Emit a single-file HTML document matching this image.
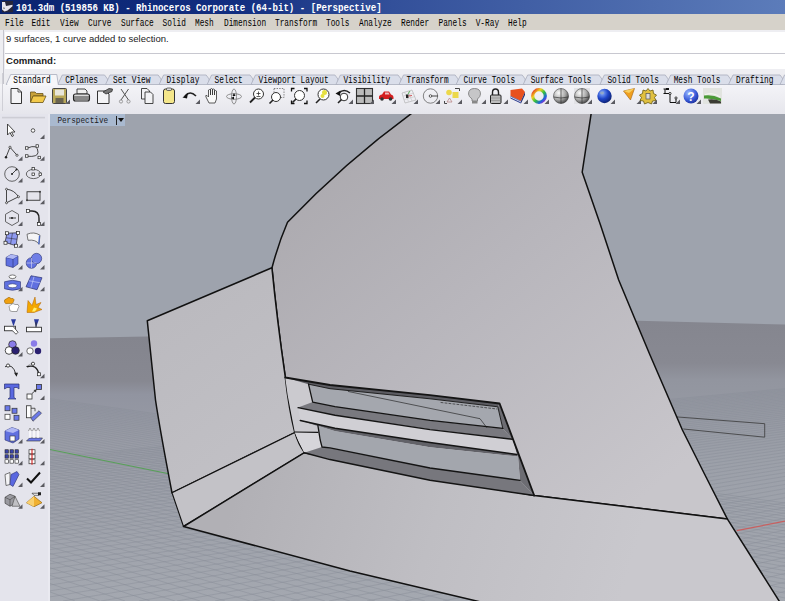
<!DOCTYPE html>
<html><head><meta charset="utf-8">
<style>
*{margin:0;padding:0;box-sizing:border-box}
html,body{width:785px;height:601px;overflow:hidden;background:#ececf0}
body{position:relative;font-family:"Liberation Sans",sans-serif}
.abs{position:absolute}
#title{left:0;top:0;width:785px;height:14px;background:linear-gradient(90deg,#0a2470 0%,#122e80 30%,#33509a 50%,#5c7cba 100%)}
#title .t{position:absolute;left:16px;top:2.5px;font-family:"Liberation Mono",monospace;font-weight:bold;font-size:9.1px;color:#fff;white-space:pre;line-height:12px;transform-origin:0 50%;transform:scaleY(1.15)}
#menu{left:0;top:14px;width:785px;height:16px;background:#d6d2ca}
.m{position:absolute;top:2.6px;font-family:"Liberation Mono",monospace;font-size:7.8px;color:#000;white-space:pre;line-height:12px;transform-origin:0 50%;transform:scaleY(1.3)}
#cmdwrap{left:0;top:30px;width:785px;height:44px;background:#eeeef2}
#cmd{left:5px;top:32px;width:780px;height:37px;background:#fff}
#vline{left:3px;top:30px;width:1px;height:82px;background:#c4c4cc}
#sep{left:5px;top:53px;width:780px;height:1px;background:#c8c8d0}
.ct{position:absolute;left:6px;font-size:9.5px;color:#222;white-space:pre;line-height:11px}
.tt{position:absolute;top:76px;font-family:"Liberation Mono",monospace;font-size:7.8px;color:#000;white-space:pre;line-height:11px;transform-origin:0 50%;transform:scaleY(1.3)}
#tb{left:0;top:84px;width:785px;height:30px;background:linear-gradient(#f4f4f8,#e6e6ec)}
#lt{left:0;top:114px;width:50px;height:487px;background:#e4e4ec}
#plab{left:50px;top:114px;width:75px;height:12px;background:#a9b9cf}
.pl{position:absolute;top:114.5px;font-family:"Liberation Mono",monospace;font-size:7.7px;color:#1a1a22;white-space:pre;line-height:12px;transform-origin:0 50%;transform:scaleY(1.12)}
</style></head><body>
<div id="title" class="abs">
 <svg class="abs" style="left:0;top:0" width="16" height="14" viewBox="0 0 16 14"><rect x="2" y="1" width="11" height="11.3" fill="#26263a"/><path d="M2 2 L5 2 L6 6 L12.5 4.8 L12.5 6.3 L7.5 10.5 L4.5 11.5 L2 9.5 Z" fill="#e6e4ec"/><path d="M3 8 L5 8.3" stroke="#555" stroke-width="0.8"/></svg>
 <div class="t">101.3dm (519856 KB) - Rhinoceros Corporate (64-bit) - [Perspective]</div>
</div>
<div id="menu" class="abs"><span class="m" style="left:5px">File</span><span class="m" style="left:31.6px">Edit</span><span class="m" style="left:60px">View</span><span class="m" style="left:88px">Curve</span><span class="m" style="left:121px">Surface</span><span class="m" style="left:162.5px">Solid</span><span class="m" style="left:195px">Mesh</span><span class="m" style="left:224px">Dimension</span><span class="m" style="left:275px">Transform</span><span class="m" style="left:326px">Tools</span><span class="m" style="left:359px">Analyze</span><span class="m" style="left:401px">Render</span><span class="m" style="left:438.5px">Panels</span><span class="m" style="left:475.7px">V-Ray</span><span class="m" style="left:508px">Help</span></div>
<div id="cmdwrap" class="abs"></div>
<div id="cmd" class="abs"></div>
<div id="vline" class="abs"></div>
<div id="sep" class="abs"></div>
<div class="ct" style="top:32.5px">9 surfaces, 1 curve added to selection.</div>
<div class="ct" style="top:54.5px;font-weight:bold;font-size:9.6px">Command:</div>
<div id="tb" class="abs"></div>
<div class="abs" style="left:2px;top:73px;width:1px;height:38px;background:#cfcfd6"></div>
<div class="abs" style="left:3px;top:30px;width:1px;height:40px;background:#c4c4cc"></div>
<svg class="abs" style="left:0;top:0" width="785" height="114"><defs>
<radialGradient id="sph" cx="0.35" cy="0.3" r="0.8"><stop offset="0" stop-color="#fafafa"/><stop offset="0.55" stop-color="#aaa"/><stop offset="1" stop-color="#333"/></radialGradient>
<radialGradient id="bsph" cx="0.35" cy="0.3" r="0.8"><stop offset="0" stop-color="#8ab0ff"/><stop offset="0.5" stop-color="#1f45c8"/><stop offset="1" stop-color="#0a1a60"/></radialGradient>
<radialGradient id="hsph" cx="0.35" cy="0.3" r="0.8"><stop offset="0" stop-color="#9ab8ff"/><stop offset="0.6" stop-color="#3a5ad8"/><stop offset="1" stop-color="#1a2a90"/></radialGradient>
<linearGradient id="cw" x1="0" y1="0" x2="1" y2="1"><stop offset="0" stop-color="#e02020"/><stop offset="0.3" stop-color="#f0d020"/><stop offset="0.55" stop-color="#30c040"/><stop offset="0.8" stop-color="#2060e0"/><stop offset="1" stop-color="#c020c0"/></linearGradient>
</defs><path d="M57.8 84.5 L62.3 75 L104.5 75 L107.5 79 V84.5 Z" fill="#dadeea" stroke="#a9adbd" stroke-width="0.8"/><path d="M105.5 84.5 L110.0 75 L158.1 75 L161.1 79 V84.5 Z" fill="#dadeea" stroke="#a9adbd" stroke-width="0.8"/><path d="M159.1 84.5 L163.6 75 L206.1 75 L209.1 79 V84.5 Z" fill="#dadeea" stroke="#a9adbd" stroke-width="0.8"/><path d="M207.1 84.5 L211.6 75 L250.0 75 L253.0 79 V84.5 Z" fill="#dadeea" stroke="#a9adbd" stroke-width="0.8"/><path d="M251.0 84.5 L255.5 75 L334.9 75 L337.9 79 V84.5 Z" fill="#dadeea" stroke="#a9adbd" stroke-width="0.8"/><path d="M335.9 84.5 L340.4 75 L398.0 75 L401.0 79 V84.5 Z" fill="#dadeea" stroke="#a9adbd" stroke-width="0.8"/><path d="M399.0 84.5 L403.5 75 L455.1 75 L458.1 79 V84.5 Z" fill="#dadeea" stroke="#a9adbd" stroke-width="0.8"/><path d="M456.1 84.5 L460.6 75 L522.2 75 L525.2 79 V84.5 Z" fill="#dadeea" stroke="#a9adbd" stroke-width="0.8"/><path d="M523.2 84.5 L527.7 75 L598.9 75 L601.9 79 V84.5 Z" fill="#dadeea" stroke="#a9adbd" stroke-width="0.8"/><path d="M599.9 84.5 L604.4 75 L665.2 75 L668.2 79 V84.5 Z" fill="#dadeea" stroke="#a9adbd" stroke-width="0.8"/><path d="M666.2 84.5 L670.7 75 L727.5 75 L730.5 79 V84.5 Z" fill="#dadeea" stroke="#a9adbd" stroke-width="0.8"/><path d="M728.5 84.5 L733.0 75 L780 75 L783 79 V84.5 Z" fill="#dadeea" stroke="#a9adbd" stroke-width="0.8"/><path d="M780 84.5 L784.5 75 L790 75 V84.5 Z" fill="#dadeea" stroke="#a9adbd" stroke-width="0.8"/><path d="M6.199999999999999 84.5 L10.7 74.5 L56.8 74.5 L58.3 84.5 Z" fill="#f6f6f9" stroke="#a9adbd" stroke-width="0.8"/><rect x="7.199999999999999" y="84" width="50.599999999999994" height="2" fill="#f6f6f9"/><g transform="translate(10,88) scale(1.0)"><path d="M1 0.5 H8 L11.5 4 V15.5 H1 Z" fill="#f4f4f6" stroke="#333" stroke-width="1"/><path d="M8 0.5 V4 H11.5" fill="none" stroke="#333" stroke-width="0.8"/></g><g transform="translate(30,88) scale(1.0)"><path d="M0.5 4 H5 L6.5 5.5 H13 V8 H3.5 L0.5 14 Z" fill="#c9a23a" stroke="#6a5418" stroke-width="0.8"/><path d="M3 8 H16 L13 14.5 H0.5 Z" fill="#f2c94a" stroke="#6a5418" stroke-width="0.8"/></g><g transform="translate(52,88) scale(1.0)"><rect x="0.5" y="0.5" width="14" height="15" rx="1" fill="#b9a85a" stroke="#444" stroke-width="1"/><rect x="3" y="1.5" width="9" height="6" fill="#e8e6dc"/><rect x="3.5" y="10" width="8" height="5" fill="#6a6450"/></g><path d="M65.5 104 L70.0 104 L70.0 99.5 Z" fill="#5a5a60"/><g transform="translate(73,88) scale(1.0)"><path d="M4 1 H12 L14 3 V6 H4 Z" fill="#f0f0f0" stroke="#333" stroke-width="0.9"/><rect x="0.5" y="6" width="16" height="7" rx="2" fill="#dcdcdc" stroke="#222" stroke-width="1.1"/><path d="M1 9 H16 M1 11 H16" stroke="#222" stroke-width="0.9"/></g><g transform="translate(97,88) scale(1.0)"><path d="M0.5 3 H9 L12 6 V15.5 H0.5 Z" fill="#f4f4f6" stroke="#333" stroke-width="1"/><path d="M6 4 L12 0.5 L15.5 1 L15 3.5 L9 6 Z" fill="#777" stroke="#222" stroke-width="0.7"/></g><g transform="translate(119,88) scale(1.0)"><path d="M2 1 L9.5 12 M9.5 1 L2 12" stroke="#555" stroke-width="1"/><circle cx="2" cy="13.5" r="1.6" fill="none" stroke="#888" stroke-width="0.8"/><circle cx="9.5" cy="13.5" r="1.6" fill="none" stroke="#888" stroke-width="0.8"/></g><g transform="translate(141,88) scale(1.0)"><path d="M0.5 0.5 H6 L8.5 3 V11 H0.5 Z" fill="#f2f2f4" stroke="#333" stroke-width="0.9"/><path d="M4 4 H9.5 L12 6.5 V15.5 H4 Z" fill="#f2f2f4" stroke="#333" stroke-width="0.9"/></g><g transform="translate(163,88) scale(1.0)"><rect x="0.5" y="1" width="11" height="14.5" rx="2" fill="#f4e68a" stroke="#333" stroke-width="1"/><rect x="3.5" y="0" width="5" height="2.5" rx="1" fill="#ddd" stroke="#333" stroke-width="0.7"/></g><g transform="translate(182,88) scale(1.0)"><path d="M3 8 Q8 2 14 8" fill="none" stroke="#222" stroke-width="1.6"/><path d="M0.5 9.5 L6 5 L5 10.5 Z" fill="#111"/></g><path d="M195.5 104 L200.0 104 L200.0 99.5 Z" fill="#5a5a60"/><g transform="translate(204,88) scale(1.0)"><path d="M5 15 L2 9 Q1 7 3 7.5 L4.5 9 V2 Q5.5 1 6.5 2 V7 V1 Q7.5 0 8.5 1 V7 V1.5 Q9.5 0.5 10.5 1.5 V7 V3 Q11.5 2 12.5 3 V11 L11 15 Z" fill="#f8f8f8" stroke="#333" stroke-width="0.8"/></g><g transform="translate(226,88) scale(1.0)"><ellipse cx="8" cy="8.5" rx="7.5" ry="2.8" fill="none" stroke="#777" stroke-width="0.8"/><ellipse cx="8" cy="8.5" rx="2.5" ry="7.5" fill="none" stroke="#777" stroke-width="0.8"/><path d="M8 5 L9.5 8 H6.5 Z" fill="#111"/><path d="M5 10 L8 8.5 L8 11.5 Z" fill="#111"/></g><g transform="translate(249,88) scale(1.0)"><circle cx="9.5" cy="6" r="5" fill="#fff" stroke="#333" stroke-width="1"/><path d="M6 9.5 L1 14.5" stroke="#222" stroke-width="1.8"/><path d="M9.5 3.5 V7.5 M7.5 5.5 H11.5 M7.5 8.5 H11.5" stroke="#333" stroke-width="0.8"/></g><g transform="translate(269,88) scale(1.0)"><rect x="5" y="0.5" width="10" height="9" fill="none" stroke="#666" stroke-width="0.8" stroke-dasharray="1.4 1.2"/><circle cx="7" cy="9" r="4.5" fill="#fff" stroke="#333" stroke-width="1"/><path d="M4 12 L0.5 15.5" stroke="#222" stroke-width="1.6"/></g><g transform="translate(291,88) scale(1.0)"><circle cx="8.5" cy="7.5" r="5" fill="#fff" stroke="#333" stroke-width="1"/><path d="M5 11 L1.5 14.5" stroke="#222" stroke-width="1.6"/><path d="M0.5 3.5 V0.5 H3.5 M13 0.5 H16 V3.5 M16 12.5 V15.5 H13 M0.5 12.5 V15.5 H3.5" fill="none" stroke="#111" stroke-width="1.3"/></g><g transform="translate(315,88) scale(1.0)"><circle cx="8.5" cy="6.5" r="5.5" fill="#fff" stroke="#333" stroke-width="1"/><circle cx="9.5" cy="4.5" r="2.5" fill="#e6e040"/><circle cx="7.5" cy="8" r="2" fill="#e6e040"/><path d="M5 11 L1 15" stroke="#222" stroke-width="1.6"/></g><g transform="translate(335,88) scale(1.0)"><path d="M4 5 Q9 0 15 5" fill="none" stroke="#222" stroke-width="1.5"/><path d="M0.5 5.5 L5.5 2.5 L5 8 Z" fill="#111"/><circle cx="9" cy="9" r="3.8" fill="#fff" stroke="#333" stroke-width="1"/><path d="M6.5 11.5 L3 15" stroke="#222" stroke-width="1.6"/></g><path d="M348.5 104 L353.0 104 L353.0 99.5 Z" fill="#5a5a60"/><g transform="translate(356,88) scale(1.0)"><rect x="0.5" y="0.5" width="16" height="15" fill="#bbb" stroke="#333" stroke-width="1.1"/><path d="M8.5 0.5 V15.5 M0.5 8 H16.5" stroke="#222" stroke-width="1.3"/></g><path d="M369.5 104 L374.0 104 L374.0 99.5 Z" fill="#5a5a60"/><g transform="translate(378,88) scale(1.0)"><path d="M1 9 Q1 7 4 6.5 L6 3.5 H11 L13 6.5 Q15.5 7 15.5 9 V11 H1 Z" fill="#d42020"/><circle cx="4" cy="11" r="1.8" fill="#333"/><circle cx="12.5" cy="11" r="1.8" fill="#333"/><path d="M7 4.5 H10.5 L11.5 6.5 H7 Z" fill="#f0c0c0"/></g><path d="M391.5 104 L396.0 104 L396.0 99.5 Z" fill="#5a5a60"/><g transform="translate(400,88) scale(1.0)"><path d="M2 5 L12 2 L16 12 L5 15 Z" fill="none" stroke="#aaa" stroke-width="0.6"/><path d="M4.5 4 L8.5 13.5 M8 3 L12 13 M3.5 8 L14 5 M4.5 11.5 L15 8.5" stroke="#bbb" stroke-width="0.5"/><rect x="6" y="6.5" width="2.5" height="3.5" fill="#222"/><path d="M8.5 8 L12 7.5" stroke="#c33" stroke-width="0.8"/><path d="M8 6 L10 3" stroke="#3a3" stroke-width="0.8"/></g><path d="M413.5 104 L418.0 104 L418.0 99.5 Z" fill="#5a5a60"/><g transform="translate(422,88) scale(1.0)"><circle cx="8.5" cy="8" r="7.2" fill="none" stroke="#666" stroke-width="0.8"/><circle cx="8.5" cy="8" r="1.3" fill="#fff" stroke="#333" stroke-width="0.8"/><path d="M9.8 8 H16" stroke="#333" stroke-width="0.9"/></g><path d="M435.5 104 L440.0 104 L440.0 99.5 Z" fill="#5a5a60"/><g transform="translate(444,88) scale(1.0)"><circle cx="5" cy="4.5" r="2.8" fill="#ecd84a"/><rect x="8.5" y="4" width="6" height="6" fill="#ecd84a"/><path d="M5.5 10 L8 14 H3 Z" fill="none" stroke="#b88" stroke-width="0.8"/><path d="M11 0.5 H15.5 V3 M0.5 13 V15.5 H3" fill="none" stroke="#333" stroke-width="0.9"/></g><path d="M457.5 104 L462.0 104 L462.0 99.5 Z" fill="#5a5a60"/><g transform="translate(468,88) scale(1.0)"><path d="M6.5 0.5 Q12.5 0.5 12.5 6 Q12.5 8.5 9.5 11 V13 H4 V11 Q0.5 8.5 0.5 6 Q0.5 0.5 6.5 0.5 Z" fill="#c6c6c8" stroke="#777" stroke-width="0.8"/><rect x="4" y="13" width="5.5" height="2.5" fill="#888"/></g><path d="M481.5 104 L486.0 104 L486.0 99.5 Z" fill="#5a5a60"/><g transform="translate(490,88) scale(1.0)"><path d="M2.5 7 V4.5 Q2.5 1 5.5 1 Q8.5 1 8.5 4.5 V7" fill="none" stroke="#222" stroke-width="1.4"/><rect x="0.5" y="7" width="10.5" height="8.5" rx="1" fill="#bcbcbc" stroke="#222" stroke-width="1"/><path d="M1 10 H10.5 M1 12.5 H10.5" stroke="#888" stroke-width="0.6"/></g><path d="M503.5 104 L508.0 104 L508.0 99.5 Z" fill="#5a5a60"/><g transform="translate(510,88) scale(1.0)"><path d="M0.5 2 L12 0.5 L15 4 L11 13 L0.5 8 Z" fill="#e8501e"/><path d="M0.5 8 L11 13 L11 15.5 L0.5 10.5 Z" fill="#2a3a8e"/><path d="M0.5 9 L11 14" stroke="#fff" stroke-width="0.8"/><path d="M11 13 L15 4 V7 L11 15.5 Z" fill="#1e2a6e"/></g><path d="M523.5 104 L528.0 104 L528.0 99.5 Z" fill="#5a5a60"/><g transform="translate(531,88) scale(1.0)"><circle cx="8" cy="8" r="6.3" fill="none" stroke="url(#cw)" stroke-width="3.2"/></g><path d="M544.5 104 L549.0 104 L549.0 99.5 Z" fill="#5a5a60"/><g transform="translate(553,88) scale(1.0)"><circle cx="8" cy="8" r="7.5" fill="url(#sph)" stroke="#444" stroke-width="0.6"/><path d="M8 0.5 V15.5 M0.5 9 Q8 11 15.5 9" fill="none" stroke="#333" stroke-width="0.7"/></g><g transform="translate(574,88) scale(1.0)"><rect x="0" y="0" width="16" height="16" fill="#e2e2e6"/><circle cx="8" cy="8" r="7.5" fill="url(#sph)" stroke="#444" stroke-width="0.6"/><path d="M8 0.5 V15.5 M0.5 9 Q8 11 15.5 9" fill="none" stroke="#333" stroke-width="0.7"/></g><path d="M587.5 104 L592.0 104 L592.0 99.5 Z" fill="#5a5a60"/><g transform="translate(597,88) scale(1.0)"><circle cx="7.5" cy="8" r="7.2" fill="url(#bsph)"/><ellipse cx="5" cy="5" rx="2" ry="1.4" fill="#9ab" opacity="0.8"/></g><path d="M610.5 104 L615.0 104 L615.0 99.5 Z" fill="#5a5a60"/><g transform="translate(623,88) scale(1.0)"><path d="M0.5 3 L11.5 0.5 L7.5 12 Z" fill="#f0a020" stroke="#a06010" stroke-width="0.6"/><path d="M0.5 3 L11.5 0.5 L6 5 Z" fill="#f8d060"/></g><path d="M636.5 104 L641.0 104 L641.0 99.5 Z" fill="#5a5a60"/><g transform="translate(639,88) scale(1.0)"><path d="M9 0.5 L11 3 L14 2 L14.5 5.5 L17.5 7 L15.5 9.5 L17 12.5 L13.5 13 L12.5 16 L9 14.5 L5.5 16 L4.5 13 L1 12.5 L2.5 9.5 L0.5 7 L3.5 5.5 L4 2 L7 3 Z" fill="#e0c040" stroke="#6a5a10" stroke-width="0.8"/><rect x="7" y="5.5" width="4" height="5.5" fill="#ddd" stroke="#555" stroke-width="0.7"/></g><path d="M652.5 104 L657.0 104 L657.0 99.5 Z" fill="#5a5a60"/><g transform="translate(662,88) scale(1.0)"><path d="M1.5 1 H6 M3 1 V6 M1.5 5.5 L8 5.5 M8 5.5 V14.5 H14 M14 10 V14.5" fill="none" stroke="#111" stroke-width="1"/><circle cx="8" cy="5.5" r="1.1" fill="#fff" stroke="#111" stroke-width="0.8"/><circle cx="14" cy="10" r="1.1" fill="#fff" stroke="#111" stroke-width="0.8"/><rect x="4" y="0" width="3" height="2" fill="#111"/></g><path d="M675.5 104 L680.0 104 L680.0 99.5 Z" fill="#5a5a60"/><g transform="translate(683,88) scale(1.0)"><circle cx="8" cy="8" r="7.5" fill="url(#hsph)"/><text x="8" y="13" font-family="Liberation Sans" font-weight="bold" font-size="12" fill="#fff" text-anchor="middle">?</text></g><path d="M696.5 104 L701.0 104 L701.0 99.5 Z" fill="#5a5a60"/><g transform="translate(703,88) scale(1.0)"><rect x="0" y="0" width="19" height="16" fill="#e2e4e0"/><path d="M1 7.5 Q9 6 18 10.5 L18 13 Q9 10 1 10.5 Z" fill="#4a9a36"/><path d="M5 11.5 Q12 10.5 18 13.5 V15.5 H7 Z" fill="#3c3c34"/><path d="M2 6.5 Q10 4 17 9" stroke="#f4f8f0" stroke-width="1" fill="none"/></g></svg>
<span class="tt" style="left:13.2px">Standard</span><span class="tt" style="left:65.3px">CPlanes</span><span class="tt" style="left:113px">Set View</span><span class="tt" style="left:166.6px">Display</span><span class="tt" style="left:214.6px">Select</span><span class="tt" style="left:258.5px">Viewport Layout</span><span class="tt" style="left:343.4px">Visibility</span><span class="tt" style="left:406.5px">Transform</span><span class="tt" style="left:463.6px">Curve Tools</span><span class="tt" style="left:530.7px">Surface Tools</span><span class="tt" style="left:607.4px">Solid Tools</span><span class="tt" style="left:673.7px">Mesh Tools</span><span class="tt" style="left:736px">Drafting</span>
<div id="lt" class="abs"></div>
<div class="abs" style="left:47.5px;top:114px;width:2.5px;height:487px;background:#e9e9f0"></div>
<div class="abs" style="left:0;top:0;width:785px;height:601px;clip-path:inset(114px 0 0 50px)"><svg class="abs" style="left:0;top:0" width="785" height="601" viewBox="0 0 785 601">
 <defs>
  <linearGradient id="floorL" x1="0" y1="336" x2="0" y2="601" gradientUnits="userSpaceOnUse">
   <stop offset="0" stop-color="#84858e"/><stop offset="0.17" stop-color="#878891"/><stop offset="0.22" stop-color="#9194a0"/><stop offset="0.4" stop-color="#999ca6"/><stop offset="1" stop-color="#a4a8b0"/>
  </linearGradient>
  <linearGradient id="floorR" x1="0" y1="321" x2="0" y2="601" gradientUnits="userSpaceOnUse">
   <stop offset="0" stop-color="#85868f"/><stop offset="0.15" stop-color="#888992"/><stop offset="0.21" stop-color="#92959f"/><stop offset="0.5" stop-color="#9ca0a9"/><stop offset="1" stop-color="#a4a8b0"/>
  </linearGradient>
  <linearGradient id="main" x1="330" y1="130" x2="640" y2="500" gradientUnits="userSpaceOnUse">
   <stop offset="0" stop-color="#aba9ae"/><stop offset="0.45" stop-color="#b8b6bc"/><stop offset="1" stop-color="#c8c6cb"/>
  </linearGradient>
  <linearGradient id="lower" x1="240" y1="480" x2="620" y2="601" gradientUnits="userSpaceOnUse">
   <stop offset="0" stop-color="#b1b0b5"/><stop offset="0.5" stop-color="#bfbec3"/><stop offset="1" stop-color="#c9c8cd"/>
  </linearGradient>
  <linearGradient id="lpan" x1="150" y1="300" x2="280" y2="480" gradientUnits="userSpaceOnUse">
   <stop offset="0" stop-color="#bab9be"/><stop offset="1" stop-color="#c2c1c6"/>
  </linearGradient>
 </defs>
 <rect x="50" y="114" width="735" height="487" fill="#9ea3ad"/>
 <path d="M50 338.3 L147 336.6 L400 331 L400 601 L50 601 Z" fill="url(#floorL)"/>
 <path d="M400 331 L637.8 320.8 L785 324.5 L785 601 L400 601 Z" fill="url(#floorR)"/>
 <clipPath id="gclip"><path d="M50 388 L400 380 L637 370 L785 372 V601 H50 Z"/></clipPath>
 <path clip-path="url(#gclip)" d="M-833 273.4 L-1500.0 601 M-833 273.4 L-1475.0 601 M-833 273.4 L-1450.0 601 M-833 273.4 L-1425.0 601 M-833 273.4 L-1400.0 601 M-833 273.4 L-1375.0 601 M-833 273.4 L-1350.0 601 M-833 273.4 L-1325.0 601 M-833 273.4 L-1300.0 601 M-833 273.4 L-1275.0 601 M-833 273.4 L-1250.0 601 M-833 273.4 L-1225.0 601 M-833 273.4 L-1200.0 601 M-833 273.4 L-1175.0 601 M-833 273.4 L-1150.0 601 M-833 273.4 L-1125.0 601 M-833 273.4 L-1100.0 601 M-833 273.4 L-1075.0 601 M-833 273.4 L-1050.0 601 M-833 273.4 L-1025.0 601 M-833 273.4 L-1000.0 601 M-833 273.4 L-975.0 601 M-833 273.4 L-950.0 601 M-833 273.4 L-925.0 601 M-833 273.4 L-900.0 601 M-833 273.4 L-875.0 601 M-833 273.4 L-850.0 601 M-833 273.4 L-825.0 601 M-833 273.4 L-800.0 601 M-833 273.4 L-775.0 601 M-833 273.4 L-750.0 601 M-833 273.4 L-725.0 601 M-833 273.4 L-700.0 601 M-833 273.4 L-675.0 601 M-833 273.4 L-650.0 601 M-833 273.4 L-625.0 601 M-833 273.4 L-600.0 601 M-833 273.4 L-575.0 601 M-833 273.4 L-550.0 601 M-833 273.4 L-525.0 601 M-833 273.4 L-500.0 601 M-833 273.4 L-475.0 601 M-833 273.4 L-450.0 601 M-833 273.4 L-425.0 601 M-833 273.4 L-400.0 601 M-833 273.4 L-375.0 601 M-833 273.4 L-350.0 601 M-833 273.4 L-325.0 601 M-833 273.4 L-300.0 601 M-833 273.4 L-275.0 601 M-833 273.4 L-250.0 601 M-833 273.4 L-225.0 601 M-833 273.4 L-200.0 601 M-833 273.4 L-175.0 601 M-833 273.4 L-150.0 601 M-833 273.4 L-125.0 601 M-833 273.4 L-100.0 601 M-833 273.4 L-75.0 601 M-833 273.4 L-50.0 601 M-833 273.4 L-25.0 601 M-833 273.4 L0.0 601 M-833 273.4 L25.0 601 M-833 273.4 L50.0 601 M-833 273.4 L75.0 601 M-833 273.4 L100.0 601 M-833 273.4 L125.0 601 M-833 273.4 L150.0 601 M-833 273.4 L175.0 601 M-833 273.4 L200.0 601 M-833 273.4 L225.0 601 M-833 273.4 L250.0 601 M-833 273.4 L275.0 601 M-833 273.4 L300.0 601 M-833 273.4 L325.0 601 M-833 273.4 L350.0 601 M-833 273.4 L375.0 601 M-833 273.4 L400.0 601 M-833 273.4 L425.0 601 M-833 273.4 L450.0 601 M-833 273.4 L475.0 601 M-833 273.4 L500.0 601 M-833 273.4 L525.0 601 M-833 273.4 L550.0 601 M-833 273.4 L575.0 601 M-833 273.4 L600.0 601 M-833 273.4 L625.0 601 M-833 273.4 L650.0 601 M-833 273.4 L675.0 601 M-833 273.4 L700.0 601 M-833 273.4 L725.0 601 M-833 273.4 L750.0 601 M-833 273.4 L775.0 601 M-833 273.4 L800.0 601 M-833 273.4 L825.0 601 M-833 273.4 L850.0 601 M-833 273.4 L875.0 601 M-833 273.4 L900.0 601 M-833 273.4 L925.0 601 M-833 273.4 L950.0 601 M-833 273.4 L975.0 601 M-833 273.4 L1000.0 601 M-833 273.4 L1025.0 601 M-833 273.4 L1050.0 601 M-833 273.4 L1075.0 601 M-833 273.4 L1100.0 601 M-833 273.4 L1125.0 601 M-833 273.4 L1150.0 601 M-833 273.4 L1175.0 601 M-833 273.4 L1200.0 601 M-833 273.4 L1225.0 601 M-833 273.4 L1250.0 601 M-833 273.4 L1275.0 601 M-833 273.4 L1300.0 601 M-833 273.4 L1325.0 601 M-833 273.4 L1350.0 601 M-833 273.4 L1375.0 601 M-833 273.4 L1400.0 601 M-833 273.4 L1425.0 601 M-833 273.4 L1450.0 601 M-833 273.4 L1475.0 601 M2023 273.4 L-1495.0 601 M2023 273.4 L-1457.0 601 M2023 273.4 L-1419.0 601 M2023 273.4 L-1381.0 601 M2023 273.4 L-1343.0 601 M2023 273.4 L-1305.0 601 M2023 273.4 L-1267.0 601 M2023 273.4 L-1229.0 601 M2023 273.4 L-1191.0 601 M2023 273.4 L-1153.0 601 M2023 273.4 L-1115.0 601 M2023 273.4 L-1077.0 601 M2023 273.4 L-1039.0 601 M2023 273.4 L-1001.0 601 M2023 273.4 L-963.0 601 M2023 273.4 L-925.0 601 M2023 273.4 L-887.0 601 M2023 273.4 L-849.0 601 M2023 273.4 L-811.0 601 M2023 273.4 L-773.0 601 M2023 273.4 L-735.0 601 M2023 273.4 L-697.0 601 M2023 273.4 L-659.0 601 M2023 273.4 L-621.0 601 M2023 273.4 L-583.0 601 M2023 273.4 L-545.0 601 M2023 273.4 L-507.0 601 M2023 273.4 L-469.0 601 M2023 273.4 L-431.0 601 M2023 273.4 L-393.0 601 M2023 273.4 L-355.0 601 M2023 273.4 L-317.0 601 M2023 273.4 L-279.0 601 M2023 273.4 L-241.0 601 M2023 273.4 L-203.0 601 M2023 273.4 L-165.0 601 M2023 273.4 L-127.0 601 M2023 273.4 L-89.0 601 M2023 273.4 L-51.0 601 M2023 273.4 L-13.0 601 M2023 273.4 L25.0 601 M2023 273.4 L63.0 601 M2023 273.4 L101.0 601 M2023 273.4 L139.0 601 M2023 273.4 L177.0 601 M2023 273.4 L215.0 601 M2023 273.4 L253.0 601 M2023 273.4 L291.0 601 M2023 273.4 L329.0 601 M2023 273.4 L367.0 601 M2023 273.4 L405.0 601 M2023 273.4 L443.0 601 M2023 273.4 L481.0 601 M2023 273.4 L519.0 601 M2023 273.4 L557.0 601 M2023 273.4 L595.0 601 M2023 273.4 L633.0 601 M2023 273.4 L671.0 601 M2023 273.4 L709.0 601 M2023 273.4 L747.0 601 M2023 273.4 L785.0 601 M2023 273.4 L823.0 601 M2023 273.4 L861.0 601 M2023 273.4 L899.0 601 M2023 273.4 L937.0 601 M2023 273.4 L975.0 601 M2023 273.4 L1013.0 601 M2023 273.4 L1051.0 601 M2023 273.4 L1089.0 601 M2023 273.4 L1127.0 601 M2023 273.4 L1165.0 601 M2023 273.4 L1203.0 601 M2023 273.4 L1241.0 601 M2023 273.4 L1279.0 601 M2023 273.4 L1317.0 601 M2023 273.4 L1355.0 601 M2023 273.4 L1393.0 601 M2023 273.4 L1431.0 601 M2023 273.4 L1469.0 601 M2023 273.4 L1507.0 601 M2023 273.4 L1545.0 601 M2023 273.4 L1583.0 601 M2023 273.4 L1621.0 601 M2023 273.4 L1659.0 601 M2023 273.4 L1697.0 601 M2023 273.4 L1735.0 601 M2023 273.4 L1773.0 601 M2023 273.4 L1811.0 601 M2023 273.4 L1849.0 601 M2023 273.4 L1887.0 601 M2023 273.4 L1925.0 601 M2023 273.4 L1963.0 601 M2023 273.4 L2001.0 601 M2023 273.4 L2039.0 601 M2023 273.4 L2077.0 601 M2023 273.4 L2115.0 601 M2023 273.4 L2153.0 601 M2023 273.4 L2191.0 601 M2023 273.4 L2229.0 601 M2023 273.4 L2267.0 601" stroke="#898d97" stroke-width="0.7" stroke-opacity="0.65" fill="none"/>
 <!-- axes -->
 <path d="M50 449.5 L170 474" stroke="#58a058" stroke-width="1.2"/>
 <path d="M736.7 530.7 L785 521.2" stroke="#c86060" stroke-width="1.2"/>
 <!-- slab on right -->
 <path d="M676.5 416.9 L764.7 423.7 L764.7 437.2 L683.3 429" stroke="#3a3a3a" stroke-width="0.8" fill="none"/>
 <!-- main surface -->
 <path d="M413.5 112 Q345 162 287.5 222.3 Q278.5 243 272 267.8 Q277 320 285.3 377.2 Q289 410 294.8 432.6 Q298 444 304.4 452.7 L534.2 495.5 L727.3 518.9 L705 475 L682.4 430 L666 392 L650 355 L634.5 318 L618.7 280 L600.5 225 L582.2 172.2 L591.4 112 Z" fill="url(#main)" stroke="#111" stroke-width="1.5" stroke-linejoin="round"/>
 <!-- left panel -->
 <path d="M147.3 320.8 L271.9 267.8 Q277 320 285.3 377.2 Q289 410 294.8 432.6 L172 492.8 Q160 430 155.5 400 Z" fill="url(#lpan)" stroke="#111" stroke-width="1.5" stroke-linejoin="round"/>
 <!-- fillet strip -->
 <path d="M172 492.8 L294.8 432.6 Q298 444 304.4 452.7 L183.5 526.5 Z" fill="#c3c2c7" stroke="#111" stroke-width="1.1" stroke-linejoin="round"/>
 <!-- lower surface -->
 <path d="M183.5 526.5 L304.4 452.7 L534.2 495.5 L727.3 518.9 L780.4 603 L485 603 L350 571 Z" fill="url(#lower)" stroke="#111" stroke-width="1.5" stroke-linejoin="round"/>
 <!-- slot -->
 <g stroke-linejoin="round">
 <path d="M285.2 377.5 L330 385 L430 395.1 L499.6 403.5 L534.2 495.5 L430 480.3 L330 459.6 L304.4 452.7 L298.1 440 L294.7 431.7 L287.6 395 Z" fill="#cbcacf"/>
 <path d="M294.7 432 L317.9 432.4 L322 447 L304.4 452.7 L298.1 440 Z" fill="#d6d5da"/>
 <path d="M308.5 384.2 L330 388.7 L430 398.8 L497.8 406.8 L502.8 428.4 L430 420.4 L335 406.6 L312.7 402.1 Z" fill="#a4a7ae"/>
 <path d="M285.2 377.5 L330 385 L430 395.1 L499.6 403.5 L497.8 406.8 L430 398.8 L330 388.7 L308.5 384.2 Z" fill="#5c5c62"/>
 <path d="M499.6 403.5 L534.2 495.5 L520 480.4 L518 456.6 L516.9 454.4 L512.5 439.3 L502.8 428.4 L497.8 406.8 Z" fill="#6c6c72"/>
 <path d="M298.1 407.4 L312.7 402.1 L335 406.6 L430 420.4 L502.8 428.4 L512.5 439.3 L430 429.6 L335 415.2 L298.1 407.7 Z" fill="#79797f"/>
 <path d="M298.1 407.7 L335 415.2 L430 429.6 L512.5 439.3 L516.9 454.4 L430 442.4 L335 427.9 L300.3 420 Z" fill="#d0cfd4"/>
 <path d="M300.3 420.5 L335 428.2 L430 442.6 L516.9 454.4 L518 456.6 L430 447.3 L335 431.2 L317.9 426 Z" fill="#626268"/>
 <path d="M317.9 425.7 L335 430.9 L430 447.3 L518 456.6 L520 480.4 L430 468 L330 447.9 L322 447 L320.2 440 Z" fill="#a3a6ad"/>
 <path d="M322 447 L330 447.9 L430 468 L520 480.4 L534.2 495.5 L430 480.3 L330 459.6 L304.4 452.7 Z" fill="#77777d"/>
 </g>
 <g fill="none" stroke="#141414" stroke-linejoin="round" stroke-linecap="round">
  <path d="M285.2 377.5 L330 385 L430 395.1 L499.6 403.5 L534.2 495.5" stroke-width="1.8"/>
  <path d="M308.5 384.2 L330 388.7 L430 398.8 L497.8 406.8 L502.8 428.4" stroke-width="0.9"/>
  <path d="M308.5 384.2 L312.7 402.1 L335 406.6 L430 420.4 L502.8 428.4" stroke-width="1.3"/>
  <path d="M298.1 407.6 L335 415.2 L430 429.6 L512.5 439.3" stroke-width="1.4"/>
  <path d="M300.3 420.5 L335 428.2 L430 442.6 L516.9 454.4" stroke-width="1.5"/>
  <path d="M317.9 425.7 L320.2 440 L322 447 L330 447.9 L430 468 L520 480.4" stroke-width="1.3"/>
  <path d="M304.4 452.7 L330 459.6 L430 480.3 L534.2 495.5" stroke-width="1.5"/>
  <path d="M294.7 432 L317.9 432.4" stroke-width="1.1"/>
  <path d="M348.3 391.5 L480 418.7 L486.6 427.4" stroke-width="0.6"/>
  <path d="M441 402.5 L497 409" stroke-width="0.6" stroke-dasharray="2 2"/>
 </g>
</svg>
</div>
<div id="plab" class="abs"></div>
<span class="pl" style="left:57.4px">Perspective</span>
<div class="abs" style="left:116px;top:116px;width:1px;height:9px;background:#222"></div>
<svg class="abs" style="left:118px;top:118px" width="6" height="5"><path d="M0 0 H6 L3 4 Z" fill="#111"/></svg>
<svg class="abs" style="left:0;top:114px" width="50" height="487" viewBox="0 114 50 487"><rect x="2" y="116.8" width="43" height="1.6" fill="#cdcdd5"/><g transform="translate(4,122.5) scale(1.0)"><path transform="translate(0,1)" d="M3.5 0.5 L3.5 11.5 L6 9 L8 13 L9.5 12.2 L7.5 8.5 L11 8.5 Z" fill="#fff" stroke="#333" stroke-width="0.9"/></g><g transform="translate(26,122.5) scale(1.0)"><circle cx="7" cy="8" r="1.8" fill="#fff" stroke="#444" stroke-width="0.9"/></g><path d="M40 139.0 L44.5 139.0 L44.5 134.5 Z" fill="#5a5a60"/><g transform="translate(4,144.25) scale(1.0)"><path d="M2 13 L6 3 L13 11" fill="none" stroke="#333" stroke-width="0.9"/><circle cx="2" cy="13" r="1.2" fill="#222"/><circle cx="6" cy="3" r="1.1" fill="#fff" stroke="#222" stroke-width="0.7"/><circle cx="13" cy="11" r="1.1" fill="#fff" stroke="#222" stroke-width="0.7"/></g><path d="M18 160.75 L22.5 160.75 L22.5 156.25 Z" fill="#5a5a60"/><g transform="translate(26,144.25) scale(1.0)"><path d="M1 4 Q12 -1 12 8 Q12 13 1 12" fill="none" stroke="#333" stroke-width="0.9"/><rect x="-0.5" y="2.5" width="2.5" height="2.5" fill="#fff" stroke="#222" stroke-width="0.7"/><rect x="10" y="0.5" width="2.5" height="2.5" fill="#fff" stroke="#222" stroke-width="0.7"/><rect x="-0.5" y="10.5" width="2.5" height="2.5" fill="#fff" stroke="#222" stroke-width="0.7"/><rect x="12" y="12" width="2.5" height="2.5" fill="#fff" stroke="#222" stroke-width="0.7"/></g><path d="M40 160.75 L44.5 160.75 L44.5 156.25 Z" fill="#5a5a60"/><g transform="translate(4,166.0) scale(1.0)"><circle cx="8" cy="8" r="7.3" fill="none" stroke="#444" stroke-width="0.8"/><path d="M8 8 L12.5 3.5" stroke="#333" stroke-width="0.9"/><circle cx="8" cy="8" r="1" fill="#222"/><circle cx="12.5" cy="3.5" r="1" fill="#222"/></g><path d="M18 182.5 L22.5 182.5 L22.5 178.0 Z" fill="#5a5a60"/><g transform="translate(26,166.0) scale(1.0)"><ellipse cx="7.5" cy="8" rx="7.2" ry="4.6" fill="none" stroke="#444" stroke-width="0.8"/><rect x="6" y="1.5" width="2.5" height="2.5" fill="#fff" stroke="#222" stroke-width="0.7"/><rect x="6" y="7" width="2.5" height="2.5" fill="#fff" stroke="#222" stroke-width="0.7"/><rect x="13" y="7" width="2.5" height="2.5" fill="#fff" stroke="#222" stroke-width="0.7"/></g><path d="M40 182.5 L44.5 182.5 L44.5 178.0 Z" fill="#5a5a60"/><g transform="translate(4,187.75) scale(1.0)"><path d="M2.5 1.5 Q10 2 14.5 9 L2.5 15 Z" fill="none" stroke="#333" stroke-width="0.9"/><circle cx="2.5" cy="1.5" r="1" fill="#fff" stroke="#222" stroke-width="0.7"/><circle cx="14.5" cy="9" r="1" fill="#fff" stroke="#222" stroke-width="0.7"/><circle cx="2.5" cy="15" r="1" fill="#fff" stroke="#222" stroke-width="0.7"/></g><path d="M18 204.25 L22.5 204.25 L22.5 199.75 Z" fill="#5a5a60"/><g transform="translate(26,187.75) scale(1.0)"><rect x="1" y="4" width="13" height="8.5" fill="none" stroke="#333" stroke-width="0.9"/><circle cx="1" cy="12.5" r="0.9" fill="#333"/><circle cx="14" cy="4" r="0.9" fill="#333"/></g><path d="M40 204.25 L44.5 204.25 L44.5 199.75 Z" fill="#5a5a60"/><g transform="translate(4,209.5) scale(1.0)"><path d="M8 1 L14.5 4.8 V12.2 L8 16 L1.5 12.2 V4.8 Z" fill="none" stroke="#444" stroke-width="0.8"/><path d="M5 8.5 H12" stroke="#333" stroke-width="0.9"/><circle cx="8" cy="8.5" r="1" fill="#222"/></g><path d="M18 226.0 L22.5 226.0 L22.5 221.5 Z" fill="#5a5a60"/><g transform="translate(26,209.5) scale(1.0)"><path d="M2 1.5 H6 Q13 1.5 13 9 V14" fill="none" stroke="#222" stroke-width="1.4"/><rect x="0.5" y="0" width="3" height="3" fill="#fff" stroke="#222" stroke-width="0.7"/><rect x="11.5" y="13" width="3" height="3" fill="#fff" stroke="#222" stroke-width="0.7"/></g><path d="M40 226.0 L44.5 226.0 L44.5 221.5 Z" fill="#5a5a60"/><g transform="translate(4,231.25) scale(1.0)"><path d="M3 2 L14 1.5 L12 14.5 L1 11 Z" fill="#8f9af0" stroke="#334" stroke-width="0.8"/><path d="M8.5 1.7 L6.5 13 M2 6.5 L13 8" stroke="#334" stroke-width="0.6"/><rect x="1.5" y="0.5" width="3" height="3" fill="#fff" stroke="#222" stroke-width="0.7"/><rect x="12.5" y="0.3" width="3" height="3" fill="#fff" stroke="#222" stroke-width="0.7"/><rect x="0" y="10" width="3" height="3" fill="#fff" stroke="#222" stroke-width="0.7"/><rect x="10.5" y="13" width="3" height="3" fill="#fff" stroke="#222" stroke-width="0.7"/></g><path d="M18 247.75 L22.5 247.75 L22.5 243.25 Z" fill="#5a5a60"/><g transform="translate(26,231.25) scale(1.0)"><path d="M1 3 Q8 0 14 4 L13 13 Q10 8 2 9 Z" fill="#f4f4f6" stroke="#555" stroke-width="0.8"/><path d="M13.5 4.5 L12.8 13" stroke="#46c" stroke-width="1.2"/></g><path d="M40 247.75 L44.5 247.75 L44.5 243.25 Z" fill="#5a5a60"/><g transform="translate(4,253.0) scale(1.0)"><path d="M2 4.5 L7 1.5 L14 3 V11 L9 14.5 L2 12.5 Z" fill="#5f70e0" stroke="#2a3070" stroke-width="0.6"/><path d="M2 4.5 L9 6 L14 3 M9 6 V14.5" fill="none" stroke="#2a3070" stroke-width="0.6"/><path d="M2 4.5 L7 1.5 L14 3 L9 6 Z" fill="#b0b8f4"/></g><path d="M18 269.5 L22.5 269.5 L22.5 265.0 Z" fill="#5a5a60"/><g transform="translate(26,253.0) scale(1.0)"><circle cx="5.5" cy="10" r="5.3" fill="#6070e0" stroke="#2a3070" stroke-width="0.6"/><circle cx="10.5" cy="5.5" r="5.2" fill="#6f7ee6" stroke="#2a3070" stroke-width="0.6"/><path d="M5.5 5 V15 M0.5 10 H10.5" stroke="#dde" stroke-width="0.6"/></g><path d="M40 269.5 L44.5 269.5 L44.5 265.0 Z" fill="#5a5a60"/><g transform="translate(4,274.75) scale(1.0)"><ellipse cx="8.5" cy="2" rx="3.5" ry="1.8" fill="#fff" stroke="#444" stroke-width="0.7"/><path d="M0.5 7 Q8.5 4 16.5 7 V14 Q8.5 17 0.5 14 Z" fill="#5f70e0" stroke="#2a3070" stroke-width="0.6"/><ellipse cx="8.5" cy="11" rx="4.5" ry="2" fill="#fff" stroke="#2a3070" stroke-width="0.6"/></g><path d="M18 291.25 L22.5 291.25 L22.5 286.75 Z" fill="#5a5a60"/><g transform="translate(26,274.75) scale(1.0)"><path d="M5 1 L16 3 L11 15 L0 12 Z" fill="#6070e0" stroke="#2a3070" stroke-width="0.7"/><path d="M3 6 L14 8 M8 2 L5 13" stroke="#c0c8f8" stroke-width="0.7"/></g><path d="M40 291.25 L44.5 291.25 L44.5 286.75 Z" fill="#5a5a60"/><g transform="translate(4,296.5) scale(1.0)"><path d="M3 2 Q5 -0.5 7 2 L9 2 Q11 3 9.5 5 L8.5 7 H4 Q1 8 0.5 5.5 Q-0.5 3 3 2 Z" fill="#f0a010" stroke="#8a5a00" stroke-width="0.5"/><path d="M7 8 Q9 6 11 8 L14 8 Q16 10 14 12 L13 15 H8 Q5 15 5.5 12 Q4 10 7 8 Z" fill="#fff" stroke="#666" stroke-width="0.6"/></g><g transform="translate(26,296.5) scale(1.0)"><path d="M1 16 L2 4 L6 9 L9 0.5 L10 8 L15 6 L12 11 L16 13 L8 16 Z" fill="#f4a800" stroke="#b06000" stroke-width="0.5"/><path d="M6 15 L8 11 L11 12 L9 15 Z" fill="#fff070"/></g><g transform="translate(4,318.25) scale(1.0)"><rect x="0.5" y="8" width="11" height="4.5" fill="#fff" stroke="#333" stroke-width="0.9"/><path d="M7 1 L12 1 L9.5 8 Z" fill="#2a3a9e"/><path d="M9 8 L14 14 L12 16 L8 12" fill="#fff" stroke="#333" stroke-width="0.8"/></g><g transform="translate(26,318.25) scale(1.0)"><rect x="0.5" y="9" width="15" height="4.5" fill="#fff" stroke="#333" stroke-width="0.9"/><path d="M8 1 L13 1 L10 9 Z" fill="#2a3a9e"/><path d="M10 4 V9" stroke="#333" stroke-width="1"/></g><g transform="translate(4,340.0) scale(1.0)"><circle cx="8.5" cy="4.5" r="3.8" fill="#8a7ce8" stroke="#222" stroke-width="0.7"/><circle cx="5" cy="10.5" r="3.8" fill="#fff" stroke="#222" stroke-width="0.8"/><circle cx="11.5" cy="10.5" r="3.8" fill="#2a2070" stroke="#222" stroke-width="0.7"/></g><path d="M18 356.5 L22.5 356.5 L22.5 352.0 Z" fill="#5a5a60"/><g transform="translate(26,340.0) scale(1.0)"><circle cx="8" cy="3.5" r="3.2" fill="#8a7ce8"/><circle cx="4" cy="11" r="3.2" fill="#fff" stroke="#333" stroke-width="0.7"/><circle cx="12" cy="11" r="3.2" fill="#2a2070"/></g><g transform="translate(4,361.75) scale(1.0)"><path d="M1 5 Q9 1 12 13" fill="none" stroke="#222" stroke-width="0.9"/><circle cx="4" cy="3.8" r="1.6" fill="#fff" stroke="#222" stroke-width="0.8"/><path d="M10 11 L12.5 15 L14 11 Z" fill="#222"/></g><g transform="translate(26,361.75) scale(1.0)"><path d="M1 5 Q11 2 13 13" fill="none" stroke="#222" stroke-width="1.4"/><circle cx="7" cy="2" r="1.6" fill="#fff" stroke="#222" stroke-width="0.8"/><path d="M0 5 L7 1" stroke="#222" stroke-width="0.6" stroke-dasharray="1 1"/><rect x="11.5" y="11" width="3" height="3" fill="#fff" stroke="#222" stroke-width="0.7"/></g><path d="M40 378.25 L44.5 378.25 L44.5 373.75 Z" fill="#5a5a60"/><g transform="translate(4,383.5) scale(1.0)"><path d="M0.5 0.5 H15 V5.5 L13 4 H10 V14 L12 15.5 H4 L6 14 V4 H3 L0.5 5.5 Z" fill="#5a68e0" stroke="#2a3070" stroke-width="0.7"/></g><g transform="translate(26,383.5) scale(1.0)"><rect x="1" y="10.5" width="5" height="5" fill="#fff" stroke="#333" stroke-width="0.8"/><rect x="10.5" y="1" width="5" height="5" fill="#6a78e8" stroke="#333" stroke-width="0.8"/><path d="M6 10 L10.5 6" stroke="#333" stroke-width="0.9"/><path d="M10.5 6 L7.5 6.5 L10 9 Z" fill="#333"/></g><path d="M40 400.0 L44.5 400.0 L44.5 395.5 Z" fill="#5a5a60"/><g transform="translate(4,405.25) scale(1.0)"><rect x="1" y="0.5" width="5" height="5" fill="#6a78e8" stroke="#333" stroke-width="0.7"/><rect x="8" y="3" width="5" height="5" fill="#6a78e8" stroke="#333" stroke-width="0.7"/><rect x="1" y="9" width="5" height="5" fill="#fff" stroke="#333" stroke-width="0.7"/><rect x="10" y="10" width="5" height="5" fill="#6a78e8" stroke="#333" stroke-width="0.7"/></g><g transform="translate(26,405.25) scale(1.0)"><rect x="0.5" y="0.5" width="4.5" height="12" fill="#fff" stroke="#333" stroke-width="0.8"/><path d="M7 16 L15.5 8 L13 5.5 L5 13 Z" fill="#6a78e8" stroke="#333" stroke-width="0.6"/><path d="M5 3 H9 V6" fill="none" stroke="#333" stroke-width="0.8"/></g><g transform="translate(4,427.0) scale(1.0)"><path d="M1 4 L8 0.5 L15 3 V12 L9 16 L1 13 Z" fill="#6070e0" stroke="#2a3070" stroke-width="0.6"/><path d="M1 4 L8 0.5 L15 3 L9 6 Z" fill="#b0b8f4"/><rect x="6" y="9" width="5" height="5" fill="#fff" stroke="#333" stroke-width="0.6"/></g><path d="M18 443.5 L22.5 443.5 L22.5 439.0 Z" fill="#5a5a60"/><g transform="translate(26,427.0) scale(1.0)"><path d="M0.5 14 L3.5 11 H16.5 L14 14 Z" fill="#6a78e8" stroke="#333" stroke-width="0.6"/><path d="M4 11 V2 M8 11 V2 M12 11 V2" stroke="#fff" stroke-width="1.3"/><path d="M2.5 4 L4 1 L5.5 4 M6.5 4 L8 1 L9.5 4 M10.5 4 L12 1 L13.5 4" fill="none" stroke="#666" stroke-width="0.6"/></g><path d="M40 443.5 L44.5 443.5 L44.5 439.0 Z" fill="#5a5a60"/><g transform="translate(4,448.75) scale(1.0)"><rect x="1" y="1" width="3.4" height="3.4" fill="#3a44a8" stroke="#222" stroke-width="0.6"/><rect x="6" y="1" width="3.4" height="3.4" fill="#3a44a8" stroke="#222" stroke-width="0.6"/><rect x="11" y="1" width="3.4" height="3.4" fill="#3a44a8" stroke="#222" stroke-width="0.6"/><rect x="1" y="6" width="3.4" height="3.4" fill="#3a44a8" stroke="#222" stroke-width="0.6"/><rect x="6" y="6" width="3.4" height="3.4" fill="#3a44a8" stroke="#222" stroke-width="0.6"/><rect x="11" y="6" width="3.4" height="3.4" fill="#3a44a8" stroke="#222" stroke-width="0.6"/><rect x="1" y="11" width="3.4" height="3.4" fill="#fff" stroke="#222" stroke-width="0.6"/><rect x="6" y="11" width="3.4" height="3.4" fill="#fff" stroke="#222" stroke-width="0.6"/><rect x="11" y="11" width="3.4" height="3.4" fill="#fff" stroke="#222" stroke-width="0.6"/></g><path d="M18 465.25 L22.5 465.25 L22.5 460.75 Z" fill="#5a5a60"/><g transform="translate(26,448.75) scale(1.0)"><rect x="3" y="1" width="6" height="4" fill="#fff" stroke="#333" stroke-width="0.7"/><rect x="3" y="6" width="6" height="4" fill="#fff" stroke="#333" stroke-width="0.7"/><rect x="3" y="11" width="6" height="4" fill="#fff" stroke="#333" stroke-width="0.7"/><path d="M6 0 V16" stroke="#d02020" stroke-width="1.1"/></g><path d="M40 465.25 L44.5 465.25 L44.5 460.75 Z" fill="#5a5a60"/><g transform="translate(4,470.5) scale(1.0)"><path d="M1 4 L6 2 V14 L2 15 Z" fill="#f4f4f6" stroke="#444" stroke-width="0.7"/><path d="M7 4 L13 1 L15 4 L9 16 L6 14 Z" fill="#5a68e0" stroke="#2a3070" stroke-width="0.6"/></g><path d="M18 487.0 L22.5 487.0 L22.5 482.5 Z" fill="#5a5a60"/><g transform="translate(26,470.5) scale(1.0)"><path d="M1 8 L5 12 L14 2" fill="none" stroke="#111" stroke-width="2"/></g><path d="M40 487.0 L44.5 487.0 L44.5 482.5 Z" fill="#5a5a60"/><g transform="translate(4,492.25) scale(1.0)"><path d="M1 5 L6 2 L11 4 V11 L6 14 L1 11 Z" fill="#9a9aa0" stroke="#333" stroke-width="0.6"/><path d="M1 5 L6 7.5 L11 4 M6 7.5 V14" fill="none" stroke="#444" stroke-width="0.6"/><path d="M11 4 L16 14 L8 14 Z" fill="#c0c0c4" stroke="#444" stroke-width="0.6"/></g><path d="M18 508.75 L22.5 508.75 L22.5 504.25 Z" fill="#5a5a60"/><g transform="translate(26,492.25) scale(1.0)"><path d="M8 4 L16 10.5 L8 14.5 L0.5 10.5 Z" fill="#f0b030" stroke="#8a5a00" stroke-width="0.6"/><path d="M8 4 L8 14.5 L0.5 10.5 Z" fill="#f8d070"/><path d="M6 1 H13 V3 H8 Z" fill="#fff" stroke="#333" stroke-width="0.7"/><path d="M12 0 H15 V3 H12 Z" fill="#222"/></g><path d="M40 508.75 L44.5 508.75 L44.5 504.25 Z" fill="#5a5a60"/></svg>
</body></html>
